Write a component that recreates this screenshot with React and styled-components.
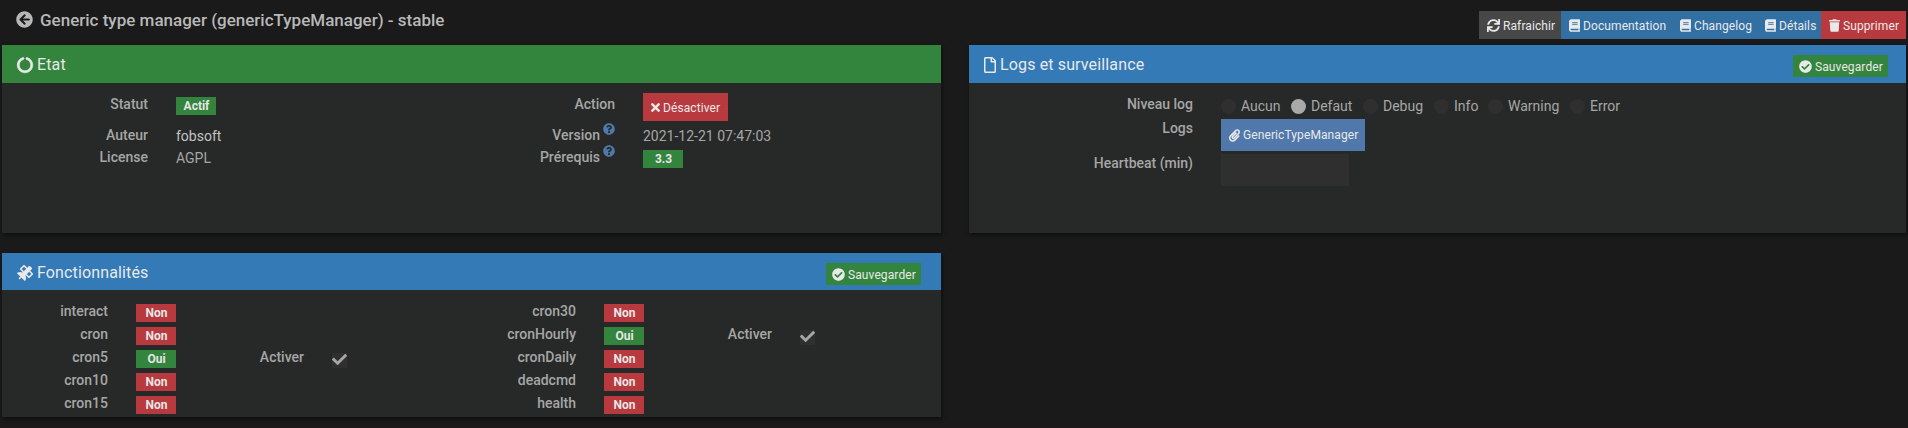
import React from "react";
import styled, { createGlobalStyle } from "styled-components";
import {
  FaArrowCircleLeft, FaCircleNotch, FaRegFile, FaSatellite, FaSync, FaBook,
  FaCheckCircle, FaPaperclip, FaTimes, FaQuestionCircle, FaCheck,
} from "react-icons/fa";

const colors = {
  green: "#33843c",
  blue: "#347ab7",
  darkBlue: "#3270a3",
  red: "#b93a3e",
  grey: "#474747",
  steel: "#5078aa",
};

const GlobalStyle = createGlobalStyle`
  * { box-sizing: border-box; }
  body {
    margin: 0;
    background: #1a1a1a;
    color: #a6a6a6;
    font: 14px/22px Roboto, sans-serif;
    overflow: hidden;
  }
`;

const Page = styled.div`
  height: 428px;
  padding: 0 2px;
  border-bottom: 1px solid #21171b;
`;

const TopBar = styled.header`
  display: flex;
  justify-content: space-between;
  height: 45px;
`;

const Title = styled.h1`
  display: flex;
  align-items: center;
  gap: 7px;
  height: 40px;
  margin: 0;
  padding-left: 14px;
  font-size: 17px;
  font-weight: 500;
  color: #b8b8b8;
  white-space: nowrap;
  svg { width: 17px; height: 17px; margin-top: -1px; }
`;

const ButtonGroup = styled.div`
  display: flex;
  padding-top: 11px;
`;

const Button = styled.button`
  display: flex;
  align-items: center;
  gap: 3px;
  flex: none;
  width: ${(p) => p.$width}px;
  height: ${(p) => p.$height ?? 28}px;
  margin: ${(p) => p.$top ?? 0}px 0 0;
  padding: ${(p) => p.$drop ?? 1}px 0 0 ${(p) => p.$left ?? 8}px;
  border: 0;
  background: ${(p) => colors[p.$tone]};
  color: #e9e9e9;
  font: 400 12px/20px Roboto, sans-serif;
  letter-spacing: 0.1px;
  white-space: nowrap;
  svg { flex: none; width: ${(p) => p.$icon ?? 13}px; height: 13px; }
`;

const Columns = styled.main`
  display: grid;
  grid-template-columns: 939px 937px;
  column-gap: 28px;
  row-gap: 20px;
`;

const Panel = styled.section`
  height: ${(p) => p.$height}px;
  background: #272928;
  box-shadow: 1px 2px 4px rgba(0, 0, 0, 0.5);
`;

const PanelHeader = styled.div`
  display: flex;
  justify-content: space-between;
  height: ${(p) => p.$height ?? 38}px;
  padding: 0 ${(p) => p.$right ?? 18}px 0 15px;
  background: ${(p) => colors[p.$tone]};
`;

const PanelTitle = styled.h2`
  display: flex;
  align-items: center;
  gap: 4px;
  height: 38px;
  margin: 0;
  padding-top: 1px;
  font-size: 16px;
  font-weight: 400;
  letter-spacing: 0.14px;
  color: #e9e9e9;
  svg { width: ${(p) => p.$icon ?? 16}px; height: 16px; }
`;

const NotchIcon = styled(FaCircleNotch)`
  stroke: currentColor;
  stroke-width: 22px;
  overflow: visible;
`;

const PanelBody = styled.div`
  display: flex;
  padding-top: 10px;
`;

const Column = styled.div`
  width: ${(p) => p.$width}px;
`;

const Row = styled.div`
  display: flex;
  align-items: flex-start;
  height: ${(p) => p.$height ?? 22}px;
`;

const Label = styled.div`
  display: flex;
  justify-content: flex-end;
  flex: none;
  width: ${(p) => p.$width}px;
  margin-right: 28px;
  font-weight: 500;
  white-space: nowrap;
`;

const Help = styled(FaQuestionCircle)`
  width: 12px;
  height: 12px;
  margin: -1px 0 0 3px;
  color: #5078aa;
`;

const Value = styled.div`
  padding-top: 1px;
  color: ${(p) => (p.$bright ? "#c4c4c4" : "#a6a6a6")};
`;

const Badge = styled.span`
  flex: none;
  width: 40px;
  height: 18px;
  margin-top: 4px;
  padding-left: 1px;
  background: ${(p) => colors[p.$tone]};
  color: #e6e6e6;
  font-size: 12px;
  font-weight: 700;
  line-height: 18px;
  text-align: center;
`;

const Radio = styled.label`
  display: flex;
  gap: 5px;
  width: ${(p) => p.$width}px;
  padding-top: 2px;
  &::before {
    content: "";
    flex: none;
    width: 15px;
    height: 15px;
    margin-top: 4px;
    border-radius: 50%;
    background: ${(p) => (p.$checked ? "#a9a9a9" : "#2f2f2f")};
  }
`;

const TextInput = styled.input`
  width: 128px;
  height: 32px;
  margin-top: 2px;
  border: 0;
  background: #2f2f2f;
`;

const CheckBox = styled.span`
  display: flex;
  width: 15px;
  height: 15px;
  margin-top: 7px;
  background: #2f2f2f;
  svg { width: 15px; height: 15px; margin-top: -1px; }
`;

const levels = [
  ["Aucun", 70], ["Defaut", 72], ["Debug", 71], ["Info", 54], ["Warning", 82], ["Error", 60],
];

const features = [
  [["interact"], ["cron"], ["cron5", true], ["cron10"], ["cron15"]],
  [["cron30"], ["cronHourly", true], ["cronDaily"], ["deadcmd"], ["health"]],
];

function TrashIcon() {
  return (
    <svg viewBox="0 0 448 512" fill="currentColor">
      <path d="M432 32H312l-9.4-18.7A24 24 0 0 0 281.1 0H166.8a23.72 23.72 0 0 0-21.4 13.3L136 32H16A16 16 0 0 0 0 48v32a16 16 0 0 0 16 16h416a16 16 0 0 0 16-16V48a16 16 0 0 0-16-16zM53.2 467a48 48 0 0 0 47.9 45h245.8a48 48 0 0 0 47.9-45L416 128H32z" />
    </svg>
  );
}

function SaveButton() {
  return (
    <Button $tone="green" $width={95} $height={22} $top={10} $left={6}>
      <FaCheckCircle />Sauvegarder
    </Button>
  );
}

function Feature({ name, active }) {
  return (
    <Row $height={23}>
      <Label $width={106}>{name}</Label>
      <Badge $tone={active ? "green" : "red"}>{active ? "Oui" : "Non"}</Badge>
      {active && (
        <>
          <Label $width={128}>Activer</Label>
          <CheckBox><FaCheck /></CheckBox>
        </>
      )}
    </Row>
  );
}

export default function App() {
  return (
    <Page>
      <GlobalStyle />
      <TopBar>
        <Title><FaArrowCircleLeft />Generic type manager (genericTypeManager) - stable</Title>
        <ButtonGroup>
          <Button $tone="grey" $width={82}><FaSync />Rafraichir</Button>
          <Button $tone="darkBlue" $width={111} $icon={11}><FaBook />Documentation</Button>
          <Button $tone="darkBlue" $width={85} $icon={11}><FaBook />Changelog</Button>
          <Button $tone="darkBlue" $width={64} $icon={11}><FaBook />Détails</Button>
          <Button $tone="red" $width={85} $icon={11}><TrashIcon />Supprimer</Button>
        </ButtonGroup>
      </TopBar>
      <Columns>
        <Panel $height={188}>
          <PanelHeader $tone="green">
            <PanelTitle><NotchIcon />Etat</PanelTitle>
          </PanelHeader>
          <PanelBody>
            <Column $width={467}>
              <Row $height={31}>
                <Label $width={146}>Statut</Label>
                <Badge $tone="green">Actif</Badge>
              </Row>
              <Row>
                <Label $width={146}>Auteur</Label>
                <Value $bright>fobsoft</Value>
              </Row>
              <Row>
                <Label $width={146}>License</Label>
                <Value>AGPL</Value>
              </Row>
            </Column>
            <Column $width={467}>
              <Row $height={31}>
                <Label $width={146}>Action</Label>
                <Button $tone="red" $width={85} $icon={9}><FaTimes />Désactiver</Button>
              </Row>
              <Row>
                <Label $width={146}>Version<Help /></Label>
                <Value>2021-12-21 07:47:03</Value>
              </Row>
              <Row>
                <Label $width={146}>Prérequis<Help /></Label>
                <Badge $tone="green">3.3</Badge>
              </Row>
            </Column>
          </PanelBody>
        </Panel>
        <Panel $height={188}>
          <PanelHeader $tone="blue">
            <PanelTitle $icon={12}><FaRegFile />Logs et surveillance</PanelTitle>
            <SaveButton />
          </PanelHeader>
          <PanelBody>
            <div>
              <Row $height={24}>
                <Label $width={224}>Niveau log</Label>
                {levels.map(([name, width]) => (
                  <Radio key={name} $width={width} $checked={name === "Defaut"}>{name}</Radio>
                ))}
              </Row>
              <Row $height={35}>
                <Label $width={224}>Logs</Label>
                <Button $tone="steel" $width={144} $height={32} $top={2} $drop={0} $icon={11}>
                  <FaPaperclip />GenericTypeManager
                </Button>
              </Row>
              <Row>
                <Label $width={224}>Heartbeat (min)</Label>
                <TextInput />
              </Row>
            </div>
          </PanelBody>
        </Panel>
        <Panel $height={164}>
          <PanelHeader $tone="blue" $height={37} $right={20}>
            <PanelTitle><FaSatellite />Fonctionnalités</PanelTitle>
            <SaveButton />
          </PanelHeader>
          <PanelBody>
            {features.map((list, i) => (
              <Column key={i} $width={468}>
                {list.map(([name, active]) => <Feature key={name} name={name} active={active} />)}
              </Column>
            ))}
          </PanelBody>
        </Panel>
      </Columns>
    </Page>
  );
}
